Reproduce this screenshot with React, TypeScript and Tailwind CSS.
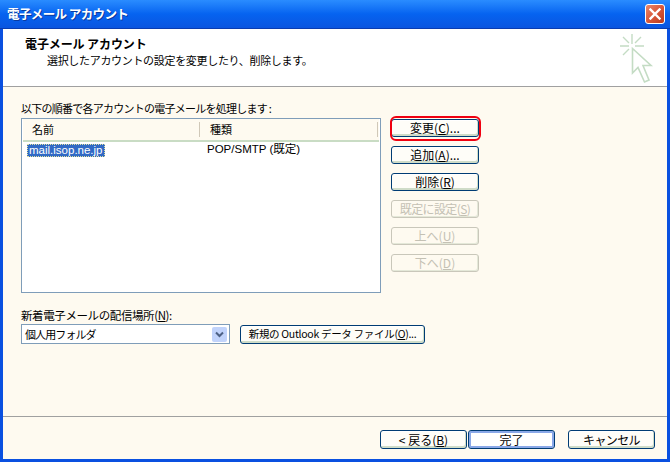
import React from "react";

function Btn({ children, disabled, className = "", def }: { children: React.ReactNode; disabled?: boolean; className?: string; def?: boolean }) {
  const base = "flex items-center justify-center rounded-[3px] border text-[12px] leading-none whitespace-nowrap ";
  const look = disabled
    ? "border-[#c9c7ba] text-[#c4c1b4] bg-[#fefaf0] shadow-[inset_-1px_-1px_0_#e4e8d8]"
    : def
    ? "border-[#003c74] text-black bg-white shadow-[inset_0_0_0_2px_#8aa8e8]"
    : "border-[#003c74] text-black bg-[#fefdf8] shadow-[inset_-1px_-2px_0_#cfdcc8,inset_0_1px_0_#ffffff]";
  return <div className={base + look + " " + className}>{children}</div>;
}

function Xbtn() {
  return (
    <div className="w-[20px] h-[20px] mr-[5px] rounded-[3px] border border-white bg-gradient-to-br from-[#e8886c] via-[#d9583a] to-[#b93a1c] flex items-center justify-center">
      <svg width="12" height="12" viewBox="0 0 12 12">
        <path d="M1.5 1.5 L10.5 10.5 M10.5 1.5 L1.5 10.5" stroke="#ffffff" strokeWidth="2.4" strokeLinecap="square" />
      </svg>
    </div>
  );
}

function Cursor() {
  return (
    <svg width="36" height="52" viewBox="0 0 36 52" className="mr-[12px] mt-[4px]" fill="none" stroke="#c4dcc4" strokeWidth="1.4">
      <path d="M13 1 V11 M1 13 H10 M16 13 H25 M4 4 L10 10 M22 4 L16 10 M4 22 L10 16" />
      <path d="M13.5 15.5 V40 L19 34.5 L25.5 49 L30 47 L24 32.5 L32 32.5 Z" strokeWidth="1.6" />
    </svg>
  );
}

export default function App() {
  return (
    <div className="w-[670px] h-[462px] flex flex-col overflow-hidden bg-[#0a50e0] font-['Noto_Sans_CJK_JP','Liberation_Sans',sans-serif]">
      <div className="h-[29px] shrink-0 flex items-center justify-between bg-gradient-to-b from-[#2a8cff] via-[#0663f0] to-[#0a55e0] border-b border-[#0a3cb0]">
        <div className="pl-[7px] pt-[1px] text-white font-bold text-[12.5px] tracking-[-0.6px] [text-shadow:1px_1px_0_#0a3aa0]">電子メール アカウント</div>
        <Xbtn />
      </div>
      <div className="flex-1 flex flex-col mx-[3px] mb-[3px] bg-[#fefaf0] min-h-0 text-black">
        <div className="h-[58px] shrink-0 bg-white border-b border-[#a0a0a0] flex justify-between">
          <div className="pl-[22px] pt-[8px]">
            <div className="font-bold text-[12px] leading-[14px] text-black tracking-[-0.1px]">電子メール アカウント</div>
            <div className="pl-[22px] text-[11px] leading-[14px] mt-[2px] text-black tracking-[-0.32px]">選択したアカウントの設定を変更したり、削除します。</div>
          </div>
          <Cursor />
        </div>

        <div className="flex-1 pl-[18px] pt-[14px] text-[11px] min-h-0">
          <div className="leading-[14px] h-[14px] tracking-[-0.75px]">以下の順番で各アカウントの電子メールを処理します :</div>
          <div className="flex mt-[3px]">
            <div className="w-[360px] h-[175px] border border-[#7f9db9] bg-white shrink-0">
              <div className="h-[21px] flex items-center bg-[#fefaf0] border-b-[2px] border-[#c9dcc4] mx-[1px] box-content">
                <div className="w-[177px] pl-[9px] border-r border-[#d0c8b8] h-[15px] flex items-center">名前</div>
                <div className="pl-[10px] flex-1 border-r border-[#d0c8b8] h-[15px] flex items-center mr-[1px]">種類</div>
              </div>
              <div className="flex mt-[1px] h-[13px] items-center">
                <div className="w-[185px] pl-[5px]">
                  <span className="bg-[#316ac5] text-white px-[2px] outline-1 outline-dotted outline-[#e0e0a0] -outline-offset-1 font-['Liberation_Sans',sans-serif] text-[11.5px] leading-[13px] inline-block">mail.isop.ne.jp</span>
                </div>
                <div className="font-['Liberation_Sans','Noto_Sans_CJK_JP',sans-serif] text-[11.5px]">POP/SMTP (既定)</div>
              </div>
            </div>
            <div className="ml-[10px] flex flex-col gap-[9px] w-[88px]">
              <div className="relative mt-[1px]">
                <Btn className="h-[18px]">変更(<u>C</u>)...</Btn>
                <div className="absolute -left-[1.5px] -right-[2px] -top-[3px] -bottom-[4px] border-[2px] border-[#f00010] rounded-[6px]" />
              </div>
              <Btn className="h-[18px]">追加(<u>A</u>)...</Btn>
              <Btn className="h-[18px]">削除(<u>R</u>)</Btn>
              <Btn disabled className="h-[18px] tracking-[-0.6px]">既定に設定(<u>S</u>)</Btn>
              <Btn disabled className="h-[18px]">上へ(<u>U</u>)</Btn>
              <Btn disabled className="h-[18px]">下へ(<u>D</u>)</Btn>
            </div>
          </div>
          <div className="mt-[15px] leading-[14px] h-[14px] text-[11.5px] tracking-[-0.4px]">新着電子メールの配信場所(<u>N</u>):</div>
          <div className="flex mt-[2px] items-center">
            <div className="w-[209px] h-[20px] border border-[#7f9db9] bg-white flex items-center justify-between pl-[3px] pr-[2px] text-[11px]">
              <span className="tracking-[-0.9px]">個人用フォルダ</span>
              <div className="w-[15px] h-[15px] rounded-[2px] bg-[#c1d3fb] flex items-center justify-center">
                <svg width="9" height="7" viewBox="0 0 9 7" fill="none">
                  <path d="M1 1.5 L4.5 5 L8 1.5" stroke="#4d6185" strokeWidth="2" />
                </svg>
              </div>
            </div>
            <Btn className="ml-[10px] w-[185px] h-[19px]">
              <span className="text-[10.5px] tracking-[-0.3px]">新規の Outlook データ ファイル(<u>O</u>)...</span>
            </Btn>
          </div>
        </div>

        <div className="h-[43px] shrink-0 border-t border-[#a0a0a0] flex pt-[13px] pl-[377px] items-start">
          <Btn className="w-[87px] h-[19px]">&lt; 戻る(<u>B</u>)</Btn>
          <Btn def className="ml-[1px] w-[87px] h-[19px]">完了</Btn>
          <Btn className="ml-[13px] w-[87px] h-[19px] tracking-[-0.6px]">キャンセル</Btn>
        </div>
      </div>
    </div>
  );
}
